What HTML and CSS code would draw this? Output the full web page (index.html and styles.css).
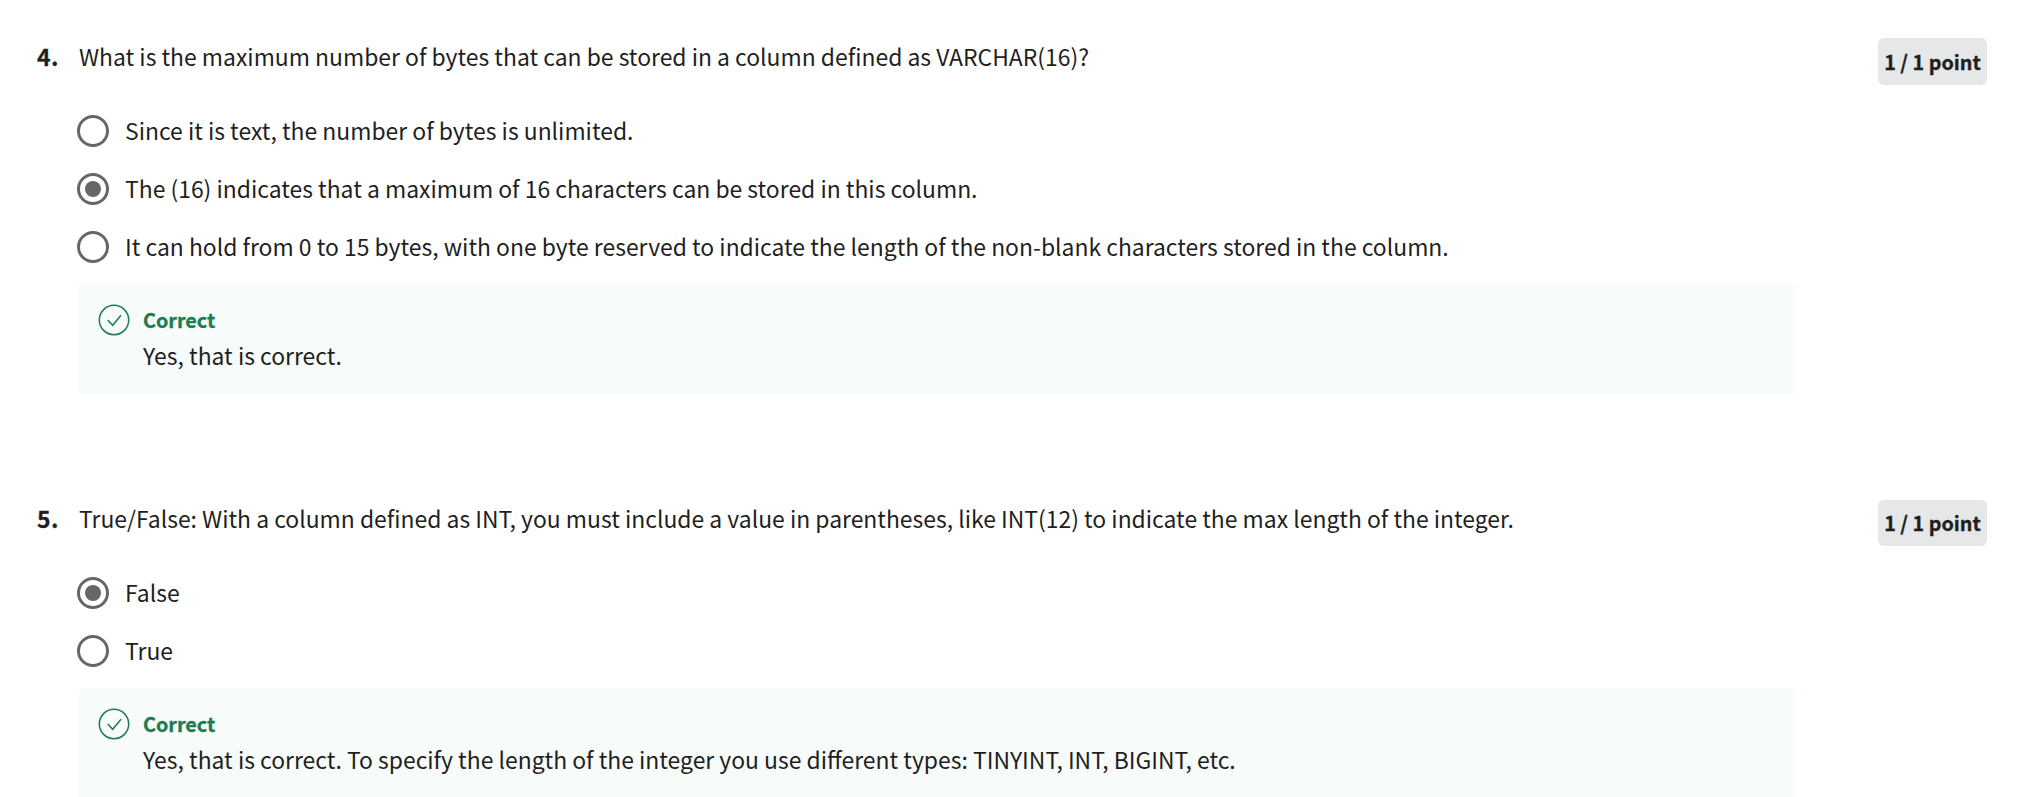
FILE: index.html
```html
<!DOCTYPE html>
<html lang="en">
<head>
<meta charset="utf-8">
<title>Quiz feedback</title>
<link rel="stylesheet" href="styles.css">
</head>
<body>
<main class="quiz">
  <section class="question">
    <div class="number">4.</div>
    <div class="content">
      <p class="prompt"><span>What is the maximum number of bytes that can be stored in a column defined as VARCHAR(16)?</span></p>
      <ul class="options">
        <li class="option"><i class="radio"></i><span>Since it is text, the number of bytes is unlimited.</span></li>
        <li class="option"><i class="radio checked"></i><span>The (16) indicates that a maximum of 16 characters can be stored in this column.</span></li>
        <li class="option"><i class="radio"></i><span>It can hold from 0 to 15 bytes, with one byte reserved to indicate the length of the non-blank characters stored in the column.</span></li>
      </ul>
      <div class="feedback">
        <svg class="tick" viewBox="0 0 32 32"><circle cx="16" cy="16" r="14.7"/><path d="M9.7 16l5 5.3 8.3-10"/></svg>
        <div><p class="verdict"><span>Correct</span></p><p class="note"><span>Yes, that is correct.</span></p></div>
      </div>
    </div>
    <div class="points tall">1 / 1 point</div>
  </section>
  <section class="question">
    <div class="number">5.</div>
    <div class="content">
      <p class="prompt"><span>True/False: With a column defined as INT, you must include a value in parentheses, like INT(12) to indicate the max length of the integer.</span></p>
      <ul class="options">
        <li class="option"><i class="radio checked"></i><span>False</span></li>
        <li class="option"><i class="radio"></i><span>True</span></li>
      </ul>
      <div class="feedback">
        <svg class="tick" viewBox="0 0 32 32"><circle cx="16" cy="16" r="14.7"/><path d="M9.7 16l5 5.3 8.3-10"/></svg>
        <div><p class="verdict"><span>Correct</span></p><p class="note"><span>Yes, that is correct. To specify the length of the integer you use different types: TINYINT, INT, BIGINT, etc.</span></p></div>
      </div>
    </div>
    <div class="points">1 / 1 point</div>
  </section>
</main>
</body>
</html>
```
FILE: styles.css
```css
* { box-sizing: border-box; margin: 0; padding: 0; }
body { background: #fff; color: #1f1f1f; font-family: "Noto Sans CJK SC", "Noto Sans", sans-serif; font-size: 22.92px; line-height: 36px; overflow: hidden; }
.quiz { height: 797px; overflow: hidden; padding: 38px 35px 0 37px; display: flex; flex-direction: column; gap: 106px; }
.question { display: flex; align-items: flex-start; flex: none; }
.number { width: 42px; flex: none; font-weight: 700; letter-spacing: 0.4px; -webkit-text-stroke: 0.3px; }
.content { width: 1716px; flex: none; }
.prompt { white-space: nowrap; }
.options { list-style: none; padding-top: 28px; margin-left: -2px; }
.option { display: flex; align-items: center; gap: 16px; height: 58px; white-space: nowrap; }
.option span { padding-bottom: 2px; }
.radio { width: 32px; height: 32px; border: 3px solid #666; border-radius: 50%; display: grid; place-items: center; flex: none; }
.checked::after { content: ""; width: 16px; height: 16px; border-radius: 50%; background: #666; }
.feedback { display: flex; gap: 13px; height: 109px; margin-top: 9px; padding: 18px 19px; background: #f7fbf9; white-space: nowrap; }
.tick { width: 32px; height: 32px; fill: none; stroke: #1d7c50; stroke-width: 1.5; flex: none; margin-top: 1px; }
.verdict { color: #1d7c50; font-weight: 700; font-size: 19.8px; margin-top: -1px; -webkit-text-stroke: 0.3px; }
.note { margin-top: -1px; }
.points { margin-left: auto; width: 109px; height: 46px; border-radius: 6px; background: #e5e7e8; font-weight: 700; font-size: 19.8px; line-height: 46px; text-align: center; white-space: nowrap; -webkit-text-stroke: 0.3px; }
.tall { height: 47px; line-height: 48px; }
```
